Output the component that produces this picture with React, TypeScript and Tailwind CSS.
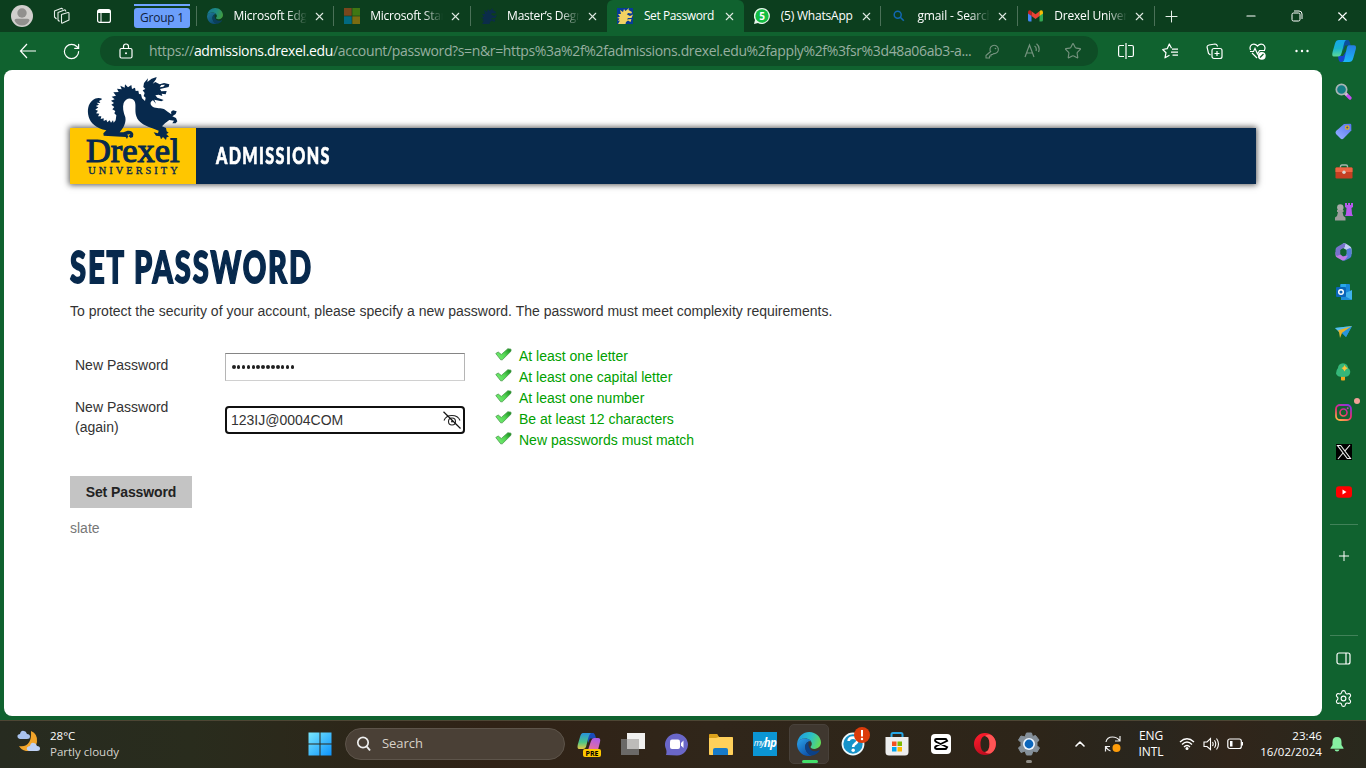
import React from "react";
import {
  X, Plus, Minus, ArrowLeft, RotateCw, Star, Settings, ChevronUp,
} from "lucide-react";

const UI = "font-['Open_Sans','Noto_Sans',sans-serif]";

function Svg({ w, h = w, box, className = "", children }: { w: number; h?: number; box?: string; className?: string; children: React.ReactNode }) {
  return (
    <svg width={w} height={h} viewBox={box ?? `0 0 ${w} ${h}`} className={`shrink-0 ${className}`} fill="none">
      {children}
    </svg>
  );
}

/* ---------- shared marks ---------- */

function EdgeMark({ size, id, dim = false }: { size: number; id: string; dim?: boolean }) {
  return (
    <Svg w={size} box="0 0 24 24" className={dim ? "opacity-60" : ""}>
      <defs>
        <linearGradient id={id + "a"} x1="2" y1="4" x2="23" y2="13" gradientUnits="userSpaceOnUse">
          <stop stopColor="#1f9fe0" /><stop offset=".5" stopColor="#2cc0c5" /><stop offset="1" stopColor="#65dc53" />
        </linearGradient>
        <linearGradient id={id + "b"} x1="2" y1="9" x2="13" y2="23" gradientUnits="userSpaceOnUse">
          <stop stopColor="#2796df" /><stop offset="1" stopColor="#0c4da5" />
        </linearGradient>
      </defs>
      <path d="M0.2 11C1.2 4.3 6.2 0 12.2 0C19 0 24 5.2 24 10.6C24 14.4 21 16.9 17.4 16.9C14.7 16.9 13.5 15.9 13.5 15.1C13.5 14.4 14.8 14 14.8 11.8C14.8 9 12 6.6 8.2 6.6C4.4 6.6 1.3 8.6 0.2 11Z" fill={`url(#${id}a)`} />
      <path d="M0 12C.4 8.800 4 6.600 8.200 6.600C11 6.600 13.200 7.900 14.200 9.600C11.500 8.500 8.200 11 8.200 15C8.200 19.300 11.300 22.600 15.200 23.500C7 26 0 19.800 0 12Z" fill={`url(#${id}b)`} />
      <path d="M8.200 15C8.200 12.300 9.700 10.300 11.800 9.500C10.800 12 11.300 19.200 18 19.200C20 19.200 21.300 18.500 22 18.200C22.600 18 22.700 18.600 22.400 19C20.700 21.500 18 23.200 15.200 23.500C11.300 22.800 8.200 19.300 8.200 15Z" fill="#0b4188" />
    </Svg>
  );
}

function CopilotMark({ id }: { id: string }) {
  return (
    <Svg w={24} h={22}>
      <defs>
        <linearGradient id={id + "a"} x1="4" y1="0" x2="5" y2="17" gradientUnits="userSpaceOnUse">
          <stop stopColor="#16a5ed" /><stop offset=".5" stopColor="#18b4cf" /><stop offset="1" stopColor="#62dc91" />
        </linearGradient>
        <linearGradient id={id + "b"} x1="20" y1="5" x2="17" y2="22" gradientUnits="userSpaceOnUse">
          <stop stopColor="#237de1" /><stop offset="1" stopColor="#1bb5f7" />
        </linearGradient>
      </defs>
      <path d="M11 0H15.500C17.500 0 18 2 18.700 5.500H13L11 11Z" fill="#0b4f9f" />
      <path d="M6 16H11L15 10L13 18C12.300 20.500 11 22 9 22C7 22 6.500 20 6 16Z" fill="#1645cd" />
      <path d="M7 0H14.500C12.500 0 12 4 11 8L9.600 13C9 15.500 8 16.500 6 16.500H2C0 16.500 0 14.500 .6 12L3 3.500C3.700 1 5 0 7 0Z" fill={`url(#${id}a)`} />
      <path d="M17 5.300H22C24 5.300 24.300 7 23.700 9.500L21.300 18C20.500 21 19 22 17 22H9.500C11.800 22 12.200 20 12.800 17L14.500 9.500C15.200 6.500 15.500 5.300 17 5.300Z" fill={`url(#${id}b)`} />
    </Svg>
  );
}

const squares = (a: string, b: string, c: string, d: string, s: number, g: number) => (
  <>
    <rect width={s} height={s} fill={a} /><rect x={s + g} width={s} height={s} fill={b} />
    <rect y={s + g} width={s} height={s} fill={c} /><rect x={s + g} y={s + g} width={s} height={s} fill={d} />
  </>
);

const DRAGON_HEAD = "M1 16L3 12.500L1 13L2.500 10.500L0 10L3 8.500L1 6L4 6L3 2L6 4L7 1L8.500 3L12 0L11.500 2L15 4L14.500 5.500L11 5L10 6.500L13 8L16 6.500L14.500 10L11 10L10 11.500L14.500 11L13.500 14L11 12.500L9 14L8.500 16Z";

/* ---------- tabs ---------- */

function Tab({ icon, title, active = false, divider = true, tracking = "" }: { icon: React.ReactNode; title: string; active?: boolean; divider?: boolean; tracking?: string }) {
  const fades = !active && !title.startsWith("(5)");
  return (
    <div className={`flex h-8 w-[136.800px] shrink-0 items-center pl-[10px] ${active ? "rounded-t-md bg-[#10622f]" : ""}`}>
      <div className="flex w-4 shrink-0 justify-center">{icon}</div>
      <div className={`ml-[10.500px] w-[73px] overflow-hidden whitespace-nowrap text-[12px] leading-4 text-white ${tracking} ${fades ? "[mask-image:linear-gradient(to_right,black_72%,transparent_100%)]" : ""}`}>{title}</div>
      <X size={13} strokeWidth={2} className="ml-[6px] shrink-0 text-[#dfe9e2]" />
      <div className={`ml-auto h-5 w-px ${divider ? "bg-[#4b7158]" : ""}`} />
    </div>
  );
}

function TabStrip() {
  return (
    <div className="flex h-8 shrink-0 items-center bg-[#0c3e1e]">
      <Svg w={22} className="ml-[11px]">
        <circle cx="11" cy="11" r="11" fill="#d1cfcd" /><circle cx="11" cy="8" r="4.700" fill="#91908e" />
        <path d="M3.500 15.500Q3.500 13.800 5.500 13.800H16.500Q18.500 13.800 18.500 15.500Q16 20.500 11 20.500T3.500 15.500Z" fill="#91908e" />
      </Svg>
      <Svg w={18} className="ml-5">
        <g stroke="#e5eee8" strokeWidth="1.100" strokeLinejoin="round">
          <path d="M8.500 7.500L15 5.500Q16 5.300 16 6.500V13L9.500 16Q8.500 16.500 8.500 15Z" /><path d="M6.500 14.500L5 13V5.500L12 2.800L13 4.500M3.500 12L1.500 10V4L8.500 1.200L10 2.200" />
        </g>
      </Svg>
      <Svg w={16} className="ml-[25px]">
        <rect x="1.600" y="1.600" width="12.800" height="12.800" rx="2" stroke="#fff" strokeWidth="1.200" /><path d="M2 2H14V5H2Z" fill="#fff" /><path d="M5 5V14" stroke="#fff" />
      </Svg>
      <div className="ml-[22px] flex h-6 w-14 flex-col gap-[2px]">
        <div className="h-[2px] shrink-0 bg-[#6fa4ff]" />
        <div className="flex h-5 shrink-0 items-center justify-center rounded-[3px] bg-[#6c9ffb] pb-px text-[12px] tracking-[-0.250px] text-[#10213c]">Group 1</div>
      </div>
      <div className="ml-[6px] h-5 w-px bg-[#4b7158]" />
      <Tab title="Microsoft Edge" tracking="tracking-[-0.250px]" icon={<EdgeMark size={16} id="te" dim />} />
      <Tab title="Microsoft Start" tracking="tracking-[-0.250px]" icon={<Svg w={16}>{squares("#79471d", "#3f7713", "#026a80", "#7a6c11", 7.700, 0.600)}</Svg>} />
      <Tab title="Master’s Degrees" divider={false} tracking="tracking-[-0.250px]" icon={<Svg w={16}><path d={DRAGON_HEAD} fill="#0b2c4a" /></Svg>} />
      <Tab title="Set Password" active divider={false} tracking="tracking-[-0.400px]" icon={<Svg w={16}><rect width="16" height="16" fill="#073c96" /><path d={DRAGON_HEAD} fill="#f2d263" /></Svg>} />
      <Tab title="(5) WhatsApp" tracking="tracking-[-0.200px]" icon={
        <Svg w={16}><path d="M8 0A8 8 0 1 1 4 15L0 16L1 12A8 8 0 0 1 8 0Z" fill="#e8f5eb" /><circle cx="8" cy="8" r="6.700" fill="#14bd43" /><text x="8" y="11.600" textAnchor="middle" fontSize="10" fontWeight="700" fill="#fff">5</text></Svg>
      } />
      <Tab title="gmail - Search" tracking="tracking-[-0.150px]" icon={<Svg w={12}><circle cx="4.700" cy="4.700" r="3.500" stroke="#1268b3" strokeWidth="1.500" /><path d="M7.300 7.300L10.800 10.800" stroke="#1268b3" strokeWidth="1.600" /></Svg>} />
      <Tab title="Drexel University" tracking="tracking-[-0.200px]" icon={
        <Svg w={15} h={12}><path d="M0 2.500V10Q0 11.500 1.500 11.500H3.500V5Z" fill="#4285f4" /><path d="M15 2.500V10Q15 11.500 13.500 11.500H11.500V5Z" fill="#34a853" /><path d="M3.500 1.200L7.500 4.200L11.500 1.200V6L7.500 9L3.500 6Z" fill="#ea4335" /><path d="M0 2.500Q0 0 2.200 .3L3.500 1.200V6L0 3.500Z" fill="#c5221f" /><path d="M15 2.500Q15 0 12.800 .3L11.500 1.200V6L15 3.500Z" fill="#fbbc04" /></Svg>
      } />
      <Plus size={19} strokeWidth={1.300} className="ml-[7px] shrink-0 text-[#e7f0e9]" />
      <Minus size={14} strokeWidth={1.900} className="ml-[63px] shrink-0 text-white" />
      <Svg w={12} className="ml-[33px]"><rect x="1" y="3" width="8" height="8" rx="1.500" stroke="#fff" /><path d="M3 1H8Q11 1 11 4V9" stroke="#fff" /></Svg>
      <X size={15} strokeWidth={1.800} className="ml-[32px] shrink-0 text-white" />
    </div>
  );
}

/* ---------- toolbar ---------- */

function Toolbar() {
  return (
    <div className="flex h-[38px] shrink-0 items-center bg-[#10622f]">
      <Svg w={18} h={16} className="ml-[19px]"><path d="M17 8H1.500M8 1L1.500 8L8 15" stroke="#fff" strokeWidth="1.200" /></Svg>
      <RotateCw size={19} strokeWidth={1.500} className="ml-[25px] shrink-0 text-white" />
      <div className="ml-[19px] flex h-[30px] w-[998px] shrink-0 items-center rounded-full bg-[#0e4d26]">
        <Svg w={14} h={16} className="ml-[19px]">
          <rect x="1" y="5.500" width="12" height="9.500" rx="1.500" stroke="#fff" strokeWidth="1.200" /><path d="M4.500 5.500V3.500A2.500 2.500 0 0 1 9.500 3.500V5.500" stroke="#fff" strokeWidth="1.200" /><circle cx="7" cy="10.300" r="1" fill="#fff" />
        </Svg>
        <div className="ml-4 w-[822px] whitespace-nowrap text-[14px] leading-5 tracking-[-0.360px] text-[#97afa0]">
          https://<span className="text-white">admissions.drexel.edu</span>/account/password?s=n&amp;r=https%3a%2f%2fadmissions.drexel.edu%2fapply%2f%3fsr%3d48a06ab3-a...
        </div>
        <Svg w={15} className="ml-[14px]"><path d="M6 8.200A4.200 4.200 0 1 1 8.600 9.600L7.500 10.500H6V12H4.500V14H1V11.500L5.600 7.500" stroke="#75937f" strokeWidth="1.100" strokeLinejoin="round" /><circle cx="10.500" cy="4.500" r=".8" fill="#75937f" /></Svg>
        <Svg w={17} h={16} className="ml-[24px]">
          <path d="M1 14L5.500 2L10 14M2.700 10H8.300M10.500 3Q13 4.500 12 8M12.500 .8Q16.500 4 14.500 9" stroke="#75937f" strokeWidth="1.200" />
        </Svg>
        <Star size={18} strokeWidth={1.500} className="ml-[23px] shrink-0 text-[#75937f]" />
      </div>
      <Svg w={16} className="ml-[20px]"><path d="M6 2.500H2Q.6 2.500 .6 4V12Q.6 13.500 2 13.500H6M10 2.500H14Q15.400 2.500 15.400 4V12Q15.400 13.500 14 13.500H10M8 0V16" stroke="#fff" strokeWidth="1.200" /></Svg>
      <Svg w={17} className="ml-[28px]"><path d="M9.500 5.200L7.300 1L5.200 5.700L.7 6.500L4 9.700L3 14.800L7.500 12.300M10 6.200H16M9 9.200H16M10.500 12.200H16" stroke="#fff" strokeWidth="1.200" strokeLinejoin="round" /></Svg>
      <Svg w={17} className="ml-[27px]"><rect x="6" y="5.500" width="10" height="10" rx="2" stroke="#fff" strokeWidth="1.200" /><path d="M11 8V13M8.500 10.500H13.500M4.500 12L2.500 10.500L1 4Q1 2.500 3 2L9 1Q11 1 11.500 3.500" stroke="#fff" strokeWidth="1.200" /></Svg>
      <Svg w={17} className="ml-[26px]">
        <path d="M1.500 7Q0 3.500 3 1.500Q6 .2 8.500 3Q11 .2 14 1.500Q17 3.500 15.500 7M3 10L8 15M1 8.500H4.500L6 5.500L8.500 11L10.500 7.500H16" stroke="#fff" strokeWidth="1.200" /><circle cx="12.800" cy="12.800" r="3.900" fill="#fff" /><path d="M11 14.500L14.500 11" stroke="#10622f" strokeWidth="1.300" />
      </Svg>
      <Svg w={14} h={4} className="ml-[29px]"><g fill="#fff"><circle cx="1.500" cy="2" r="1.200" /><circle cx="7" cy="2" r="1.200" /><circle cx="12.500" cy="2" r="1.200" /></g></Svg>
      <div className="ml-[23px]"><CopilotMark id="tc" /></div>
    </div>
  );
}

/* ---------- page ---------- */

function DrexelLogo() {
  return (
    <svg width={126} height={114} viewBox="30 0 378 342" className="absolute bottom-0 left-0" fill="#07294d">
      <path d="M127 87C118 82 107 83 98 91C84 102 81 121 86 140C91 159 108 174 139 181L130 190L131 197L197 201L201 207L205 198L212 204L219 201L220 192C216 180 204 180 190 187L179 187C191 174 199 157 196 142C190 126 187 112 191 99C196 85 213 80 223 92C230 104 223 119 229 139C235 160 260 169 281 176L296 182L294 190L281 187L288 197L300 199L303 208L309 201L318 210L320 202L327 200L319 192L326 188L320 184L318 174L306 169L315 160L328 150L342 152L337 160L347 160L352 154L348 144L337 139L347 132L350 124L339 121L333 125L334 133L324 126L313 118C303 112 290 117 278 110C269 104 270 94 279 91L288 101L283 89L304 94L311 90L292 83L286 76L296 74L307 78L305 71L317 73L320 63L304 64L300 57L326 51L328 43L312 39L299 43L286 36L278 41L288 28L290 21L275 26L262 36L264 25L252 39L250 51L256 57L248 61L254 69L251 78L257 83L255 93L246 85L243 73L237 72L235 62L227 63L225 53L216 57L214 45L204 52L195 43L194 53L181 47L185 58L171 56L176 66L160 67L168 77L155 80L164 88L153 92L162 99L154 104L163 111L157 118L166 123L163 130L169 136L167 151L161 158L159 151L153 158L149 151L142 157L139 149L131 153L131 145L122 147L124 139L114 139L118 131L108 130L114 122L106 119L115 112L107 108L117 104L110 98L121 99L117 93Z" />
      <path d="M304 45L315 44L310 50L299 52Z" fill="#fff" />
      <path d="M201 194L211 192L206 199Z" fill="#ffc600" />
      <g fontFamily="'Liberation Serif',serif">
        <text x="78" y="275" fontSize="104" textLength="281" lengthAdjust="spacingAndGlyphs" stroke="#07294d" strokeWidth="3.500">Drexel</text>
        <text x="85" y="311" fontSize="31" textLength="268" stroke="#07294d" strokeWidth="1">UNIVERSITY</text>
      </g>
    </svg>
  );
}

function Check({ children, id }: { children: string; id: string }) {
  return (
    <li className="flex h-[21px] items-center">
      <Svg w={17} h={13} className="mr-[7px] -mt-[4px]">
        <defs><linearGradient id={id} x1="2" y1="11" x2="15" y2="1" gradientUnits="userSpaceOnUse"><stop stopColor="#78f276" /><stop offset=".55" stopColor="#52d452" /><stop offset="1" stopColor="#178c1e" /></linearGradient></defs>
        <path d="M.8 5.500L3.200 4L6.300 6.500L12.800 .8L16 1.200V3.200L7.300 11.800H5.700Z" fill={`url(#${id})`} stroke="#4a9a4c" strokeWidth=".8" strokeLinejoin="round" />
      </Svg>
      {children}
    </li>
  );
}

function Page() {
  return (
    <main className="ml-1 h-[646px] w-[1318px] shrink-0 rounded-[8px] bg-white px-[66px] pt-[58px] font-['Liberation_Sans',Arial,sans-serif] text-[14px] text-[#333]">
      <header className="relative flex h-14 w-[1186px] items-center bg-[#07294d] shadow-[0_0_6px_1px_rgba(0,0,0,0.650)]">
        <div className="h-14 w-[126px] bg-[#ffc600]" />
        <DrexelLogo />
        <div className="mb-[2px] ml-5 origin-left scale-x-[0.700] whitespace-nowrap font-['Lato',sans-serif] text-[23px] font-black leading-7 tracking-[2px] text-white [-webkit-text-stroke:0.700px_white]">ADMISSIONS</div>
      </header>
      <h1 className="mt-[55px] h-[54px] origin-left scale-x-[0.660] whitespace-nowrap font-['Lato',sans-serif] text-[44px] font-black leading-[54px] tracking-[2.900px] text-[#07294d] [-webkit-text-stroke:1.800px_#07294d]">SET PASSWORD</h1>
      <p className="mt-[8px] leading-5 whitespace-nowrap">To protect the security of your account, please specify a new password. The password must meet complexity requirements.</p>
      <div className="mt-6 flex h-[110px]">
        <div className="flex w-[395px] flex-col pl-[5px]">
          <label className="flex h-[42px] pt-[8px]">
            <span className="w-[150px] pt-[2px] leading-5">New Password</span>
            <span className="flex h-7 w-60 items-center gap-[1.400px] border border-[#b5b5b5] border-t-[#858585] border-b-[#d0d0d0] pl-[6px]">
              {Array.from({ length: 13 }, (_, i) => <span key={i} className="size-[3.500px] rounded-full bg-[#222]" />)}
            </span>
          </label>
          <label className="mt-[10px] flex">
            <span className="w-[150px] leading-5">New Password<br />(again)</span>
            <span className="mt-[9px] flex h-7 w-60 items-center justify-between rounded-[4px] border-2 border-[#101010] pl-1 pr-[2px]">
              123IJ@0004COM
              <Svg w={18}><path d="M1 9.500Q3 4.500 9 4.500T17 9.500" stroke="#222" strokeWidth="1.100" /><circle cx="9" cy="10.500" r="3.500" stroke="#222" strokeWidth="1.100" /><circle cx="9" cy="10.500" r="1" fill="#222" /><path d="M.5 .8L17.500 17.500" stroke="#111" strokeWidth="1.200" /></Svg>
            </span>
          </label>
        </div>
        <ul className="ml-[30px] mt-px h-[105px] text-[#00a000]">
          <Check id="k1">At least one letter</Check>
          <Check id="k2">At least one capital letter</Check>
          <Check id="k3">At least one number</Check>
          <Check id="k4">Be at least 12 characters</Check>
          <Check id="k5">New passwords must match</Check>
        </ul>
      </div>
      <button className="mt-[21px] block h-8 w-[122px] bg-[#c4c4c4] font-bold tracking-[-0.100px] text-[#222]">Set Password</button>
      <footer className="mt-[10px] leading-5 text-[#777]">slate</footer>
    </main>
  );
}

/* ---------- side bar ---------- */

function Slot({ children, className = "h-10" }: { children: React.ReactNode; className?: string }) {
  return <div className={`flex w-11 shrink-0 items-center justify-center ${className}`}>{children}</div>;
}

function Sidebar() {
  return (
    <aside className="flex w-11 flex-col items-center pt-px pr-px">
      <Slot><Svg w={17}><path d="M10 10L15 15" stroke="#c44df0" strokeWidth="3.200" strokeLinecap="round" /><path d="M10 10L12 12" stroke="#ccc" strokeWidth="2.500" /><circle cx="6.500" cy="6.500" r="5.200" fill="#157e86" stroke="#a9b5b5" strokeWidth="1.700" /></Svg></Slot>
      <Slot><Svg w={17}><defs><linearGradient id="tag" x1="14" y1="1" x2="4" y2="14" gradientUnits="userSpaceOnUse"><stop stopColor="#5b78f0" /><stop offset="1" stopColor="#8da8ff" /></linearGradient></defs><path d="M9 1L15 .7Q16.300 .7 16.300 2V7.500L8.500 15.500Q7 17 5.500 15.500L1 11Q0 9.500 1 8Z" fill="url(#tag)" /><circle cx="12.300" cy="4.500" r="1.700" fill="#3a4894" stroke="#dfb222" strokeWidth="1.300" /></Svg></Slot>
      <Slot className="h-10 pt-px"><Svg w={18} h={15}><path d="M5.500 4V2.500Q5.500 1 7 1H11Q12.500 1 12.500 2.500V4" stroke="#a6b6ad" strokeWidth="1.400" /><rect x=".5" y="3.500" width="17" height="11" rx="1.200" fill="#c63f22" /><path d="M.5 4.500Q.5 3.500 1.500 3.500H16.500Q17.500 3.500 17.500 4.500V8H.5Z" fill="#ed6442" /><circle cx="9" cy="8.200" r="1.700" fill="#d9d5d0" /></Svg></Slot>
      <Slot className="h-10 pt-px"><Svg w={18} h={18}><path d="M10 0H12V2H13V0H15V2H16V0H18V4L16.500 5L17 11L18 13H10L11 11L11.500 5L10 4Z" fill="#b659ed" /><circle cx="5.300" cy="4.500" r="3.200" fill="#aaa" /><path d="M2 7H8.500V9H7.500L8.500 13L10.500 14.500V17.500H0V14.500L2 13L3 9H2Z" fill="#9c9c9c" /></Svg></Slot>
      <Slot className="h-10 pt-[2px]"><Svg w={17} h={18}><path d="M8 .5Q10 0 11.500 1L15 3.300Q16.500 4.300 16.500 6V11L11.500 13.500V7.500L7 4.500Z" fill="#c1cdf5" /><path d="M16.500 6V12Q16.500 14 15 15L10 17.500Q8.500 18 7 17.200L5 15.500L11.500 12V6.500L15 5Z" fill="#547cd8" /><path d="M.5 9V12Q.5 13.500 2 14.500L7 17.300Q9 18 11 15.500L13 12.500L8 13.500L5.500 11.500Z" fill="#bd7be4" /><path d="M8 .5L2 4Q.5 5 .5 7V10.500Q.5 12 2 13L5.500 11.500V7L10 4Q9.500 1.500 11 .8Q9.500 0 8 .5Z" fill="#7773cc" /><path d="M5.500 7L8.500 5.200L11.500 7V11L8.500 12.800L5.500 11Z" fill="#10622f" /></Svg></Slot>
      <Slot className="h-10 pt-[2px]"><Svg w={16}><rect x="4" width="10" height="13" rx="1" fill="#1687da" /><path d="M5 0H10V6H5Z" fill="#28a8ea" /><path d="M5 11L16 6V15Q16 16 15 16H5Z" fill="#3fb2ec" /><path d="M5 10L16 16H5Z" fill="#1a8bd8" /><rect y="3" width="10" height="10" rx="1" fill="#0a65b8" /><circle cx="5" cy="8" r="2.300" stroke="#fff" strokeWidth="1.400" /></Svg></Slot>
      <Slot className="h-10 pt-[2px]"><Svg w={17} h={14}><path d="M0 3L17 1L11 12L7 8Z" fill="#219edc" /><path d="M0 3L17 1L5 8Z" fill="#58c0ed" /><path d="M3 5.500L17 1L7 8L5 13L4 7Z" fill="#e8b22b" /><path d="M7 8L17 1L11 12Z" fill="#2994dc" /></Svg></Slot>
      <Slot className="h-10 pt-[2px]"><Svg w={15} h={18}><rect x="5" y="12" width="4" height="5.500" rx=".8" fill="#f1a51d" /><path d="M7 .3Q12 1 12 5Q15 7 14 10.500Q13 14 7 14T0 10.500Q0 7 2 5Q2 1 7 .3Z" fill="#35b779" /><path d="M8.500 2L10 4.200L12 5L9.700 6.500L8.500 8.500L7.200 6.300L5.500 5L7.300 4.200Z" fill="#ffc33c" /></Svg></Slot>
      <Slot className="relative h-10 pt-[2px]"><Svg w={17}><defs><linearGradient id="ig" x1="13" y1="0" x2="3" y2="17" gradientUnits="userSpaceOnUse"><stop stopColor="#8236e5" /><stop offset=".5" stopColor="#ea2a76" /><stop offset="1" stopColor="#ffc33d" /></linearGradient></defs><rect x="1" y="1" width="15" height="15" rx="4" stroke="url(#ig)" strokeWidth="1.800" /><circle cx="8.500" cy="8.500" r="3.500" stroke="url(#ig)" strokeWidth="1.600" /><circle cx="12.700" cy="4.300" r="1" fill="#c13cae" /></Svg><span className="absolute right-[6px] top-[7px] size-[6px] rounded-full bg-[#f3a198]" /></Slot>
      <Slot className="h-10 pt-[2px]"><Svg w={16}><rect width="16" height="16" fill="#000" /><path d="M1.500 1.500H4.700L14.500 14.500H11.300ZM14 1L9 6.800M7 9L2 15" stroke="#eee" strokeWidth="1.100" /></Svg></Slot>
      <Slot className="h-10 pt-[2px]"><Svg w={16} h={12}><rect y=".3" width="16" height="11.400" rx="3" fill="#f00" /><path d="M6.500 3.600V8.400L10.500 6Z" fill="#fff" /></Svg></Slot>
      <div className="mt-[13px] h-px w-7 shrink-0 bg-[#418259]" />
      <Slot className="h-[62px]"><Plus size={16} strokeWidth={1.500} className="text-white" /></Slot>
      <div className="mt-[48px] h-px w-7 shrink-0 bg-[#418259]" />
      <Slot className="h-[44px]"><Svg w={15} h={13}><rect x="1" y="1" width="13" height="11" rx="2" stroke="#fff" strokeWidth="1.200" /><path d="M10 1V12" stroke="#fff" strokeWidth="1.200" /></Svg></Slot>
      <Slot className="h-[36px]"><Settings size={19} strokeWidth={1.400} className="text-white" /></Slot>
    </aside>
  );
}

/* ---------- task bar ---------- */

function Taskbar() {
  return (
    <div className="flex h-12 shrink-0 items-center border-t border-[#4d4634] bg-[linear-gradient(90deg,#272b20_0%,#292c1d_14%,#302216_36%,#30261a_52%,#2d2519_76%,#29261e_84%,#30251a_90%,#29281d_100%)] pb-px text-[12px] text-white">
      <Svg w={25} h={24} className="-mt-[4px] ml-[17px]">
        <path d="M14 1Q21 4 20 12Q18 22 9 21Q4 20 2 16Q15 18 14 1Z" fill="#f2a52a" />
        <path d="M3 9Q0 8 .5 5.500Q1 4 3 4Q4 0 7 1Q9 1 10 4Q13 4 13 6.500Q13 9 10 9Z" fill="#a9c3ee" />
        <path d="M12 21Q9 20 10 17.500Q11 16 13 16Q14 12 17 13Q19 13 20 16Q23 16 23 18.500Q23 21 20 21Z" fill="#bed1f3" />
      </Svg>
      <div className="ml-2 w-[258px] text-[11.500px] leading-4">28°C<br /><span className="text-[#d6d4ce]">Partly cloudy</span></div>
      <Svg w={24}>
        <defs><linearGradient id="win" x1="0" y1="0" x2="24" y2="24" gradientUnits="userSpaceOnUse"><stop stopColor="#7ce9fd" /><stop offset="1" stopColor="#0a91fc" /></linearGradient></defs>
        <path d="M.5 .5H11.500V11.500H.5ZM12.500 .5H23.500V11.500H12.500ZM.5 12.500H11.500V23.500H.5ZM12.500 12.500H23.500V23.500H12.500Z" fill="url(#win)" />
      </Svg>
      <div className="ml-[13px] mr-[2px] flex h-8 w-[220px] shrink-0 items-center rounded-full border border-[#5d544a] bg-[#4a4036] pl-[10px] text-[13px] tracking-[-0.050px] text-[#d8d2c9]">
        <Svg w={16} className="mr-[10px]"><circle cx="7" cy="6.500" r="5.200" stroke="#eee" strokeWidth="1.700" /><path d="M10.800 10.500L14 14.500" stroke="#eee" strokeWidth="2" /></Svg>
        Search
      </div>
      <Slot>
        <div className="relative">
          <Svg w={24} h={24}>
            <defs><linearGradient id="cpa" x1="3" y1="0" x2="3" y2="17" gradientUnits="userSpaceOnUse"><stop stopColor="#238de5" /><stop offset=".6" stopColor="#4bc487" /><stop offset="1" stopColor="#e8c843" /></linearGradient><linearGradient id="cpb" x1="20" y1="5" x2="15" y2="20" gradientUnits="userSpaceOnUse"><stop stopColor="#a65af0" /><stop offset="1" stopColor="#f0738e" /></linearGradient></defs>
            <path d="M10 1H16Q18 1 19 6.500H13L11 11Z" fill="#1a4cba" /><path d="M6 1H14Q12 2 10.500 9L9 15Q8 17 6 17H2Q0 17 .7 13L3 5Q4 1 6 1Z" fill="url(#cpa)" /><path d="M17 6H21Q24 6 23 10L21 18H11L14 9Q15 6 17 6Z" fill="url(#cpb)" />
          </Svg>
          <span className="absolute -bottom-px left-[6px] flex h-[8px] w-[18px] items-center justify-center rounded-[2px] bg-[#ffc800] text-[7px] font-bold leading-none text-black">PRE</span>
        </div>
      </Slot>
      <Slot><Svg w={24} h={22}><rect y="6" width="18" height="16" fill="#6b6967" /><rect x="6" width="18" height="16" fill="#f0f0ef" /><path d="M6 6H18V16H6Z" fill="#bdbbb9" /></Svg></Slot>
      <Slot><Svg w={24} h={23}><path d="M1 22Q2 19 1 16A11.500 11 0 1 1 12 22.500Z" fill="#6a67c8" /><rect x="5" y="6.500" width="10" height="9.500" rx="2" fill="#fff" /><path d="M16 10L18.500 7.500V15L16 12.500Z" fill="#fff" /></Svg></Slot>
      <Slot><Svg w={24} h={23}><path d="M0 2Q0 1 1 1H8L10 4H23Q24 4 24 5V21Q24 22 23 22H1Q0 22 0 21Z" fill="#d9980f" /><rect y="4" width="24" height="18" rx="1.300" fill="#ffd05b" /><path d="M4 22V17Q4 15 6 15H17Q19 15 19 17V22Z" fill="#177ac8" /><path d="M0 3V5H7L10 4L8 1H1Z" fill="#daa11c" /></Svg></Slot>
      <Slot><div className="flex size-6 items-center justify-center bg-[#0b95d4] pb-[2px] text-[8.500px] italic leading-none tracking-[-0.600px] text-white">my<span className="text-[11.500px] font-bold">hp</span></div></Slot>
      <Slot><div className="relative flex size-10 items-center justify-center rounded-[5px] border border-[#48413a] bg-[#3f372f]"><EdgeMark size={24} id="be" /><span className="absolute bottom-0 left-3 h-[3px] w-4 rounded-full bg-[#44df6b]" /></div></Slot>
      <Slot><div className="relative"><Svg w={24} box="0 0 25 25"><circle cx="12.500" cy="12.500" r="11" fill="#1592c9" stroke="#eef8fc" strokeWidth="1.800" /><path d="M8 9.500Q8 5.800 12.500 5.800Q17 5.800 17 9Q17 11 14.500 12.500Q12.700 13.700 12.700 15.500" stroke="#fff" strokeWidth="2.800" /><circle cx="12.700" cy="19" r="1.800" fill="#fff" /></Svg><span className="absolute -right-[5px] -top-[5px] flex size-4 items-center justify-center rounded-full bg-[#dc3b0b]"><Svg w={4} h={12}><path d="M2 1V7.500" stroke="#fff" strokeWidth="2" /><circle cx="2" cy="10" r="1.200" fill="#fff" /></Svg></span></div></Slot>
      <Slot><Svg w={24}><path d="M6.500 6V2.500Q6.500 1 8 1H16Q17.500 1 17.500 2.500V6" stroke="#28a6e4" strokeWidth="2" /><path d="M.5 5H23.500V20Q23.500 23.500 20 23.500H4Q.5 23.500 .5 20Z" fill="#eee" /><path d="M7 9.500H11.500V14H7Z" fill="#f25022" /><path d="M12.500 9.500H17V14H12.500Z" fill="#7fba00" /><path d="M7 15H11.500V19.500H7Z" fill="#00a4ef" /><path d="M12.500 15H17V19.500H12.500Z" fill="#ffb900" /></Svg></Slot>
      <Slot><Svg w={20}><rect width="20" height="20" rx="4" fill="#fff" /><path d="M15.500 6.500V6Q15.500 5 14.500 5H5.500Q4 5 4 6.200T5.500 8L17 13.500M15.500 13.500V14Q15.500 15 14.500 15H5.500Q4 15 4 13.800T5.500 12L17 6.500" stroke="#000" strokeWidth="1.900" /></Svg></Slot>
      <Slot><Svg w={22}><defs><linearGradient id="op" x1="5" y1="0" x2="14" y2="22" gradientUnits="userSpaceOnUse"><stop stopColor="#ff1c2c" /><stop offset="1" stopColor="#b90b1d" /></linearGradient></defs><path fillRule="evenodd" d="M11 0A11 11 0 1 1 11 22A11 11 0 0 1 11 0ZM11 3C8 3 6.500 7 6.500 11S8 19 11 19S15.500 15 15.500 11S14 3 11 3Z" fill="url(#op)" /><path d="M11 3Q14 0 18 2.600A11 11 0 0 1 18 19.400Q14 22 11 19Q15.500 18 15.500 11T11 3Z" fill="#ff5555" /></Svg></Slot>
      <Slot><div className="relative"><Svg w={24}><path d="M9.500 1H14.500L15.500 4.500L18.500 3.500L22 8L20 10.500V13.500L22.500 16L20 20L16 19L14.500 23H9.500L8 19L4 20.500L1.500 16L4 13.500V10.500L1.500 8L4 4L8 5Z" fill="#85909a" stroke="#85909a" strokeLinejoin="round" /><circle cx="12" cy="12" r="6" fill="#eef6ff" /><circle cx="12" cy="12" r="4.400" fill="#0a65bb" /></Svg><span className="absolute -bottom-[7px] left-[9px] h-[3px] w-[6px] rounded-full bg-[#8f8c86]" /></div></Slot>
      <ChevronUp size={16} strokeWidth={2.400} className="ml-[21px] shrink-0" />
      <Svg w={18} className="ml-4"><path d="M2 7Q3 2 8.500 2Q13 2 15.500 5.500M16 1V6H11M1.500 16.500V11.500H6M2 12Q3.500 15 6.500 16" stroke="#eee" strokeWidth="1.200" /><circle cx="12.500" cy="13" r="4" fill="#ff9d0a" /></Svg>
      <div className="ml-[14px] w-[30px] text-center text-[12px] leading-4 tracking-[-0.100px]">ENG<br />INTL</div>
      <Svg w={16} h={14} className="ml-[13px]"><path d="M1 5Q8 -1.500 15 5M3 7.500Q8 2.500 13 7.500M5 10Q8 7 11 10" stroke="#fff" strokeWidth="1.400" /><circle cx="8" cy="11.500" r="1.500" fill="#fff" /></Svg>
      <Svg w={17} h={14} className="ml-2"><path d="M1 5H4L7.500 1.500V12.500L4 9.500H1Z" stroke="#fff" strokeWidth="1.100" /><path d="M9.500 5Q10.800 7 9.500 9M11.500 3.300Q14 7 11.500 10.700M13.500 1.500Q17.500 7 13.500 12.500" stroke="#fff" strokeWidth="1.100" /></Svg>
      <Svg w={17} h={12} className="ml-[7px]"><rect x=".8" y="1" width="13.500" height="9.500" rx="2" stroke="#fff" strokeWidth="1.200" /><path d="M3 3H5.500V8.500H3ZM14.500 4H16V7.500H14.500Z" fill="#fff" /></Svg>
      <div className="ml-3 w-[66px] text-right text-[11.500px] leading-4 tracking-[0.080px]">23:46<br />16/02/2024</div>
      <Svg w={14} h={16} className="ml-[8px]"><path d="M.5 12L2.500 9V6Q2.500 1 7 1T11.500 6V9L13.500 12V12.700H.5ZM4.500 13.500H9.500Q9 15.500 7 15.500T4.500 13.500Z" fill="#86f0a2" /></Svg>
    </div>
  );
}

export default function App() {
  return (
    <div className={`flex h-[768px] w-[1366px] flex-col overflow-hidden bg-[#10622f] ${UI}`}>
      <TabStrip />
      <Toolbar />
      <div className="flex h-[650px] shrink-0"><Page /><Sidebar /></div>
      <Taskbar />
    </div>
  );
}
